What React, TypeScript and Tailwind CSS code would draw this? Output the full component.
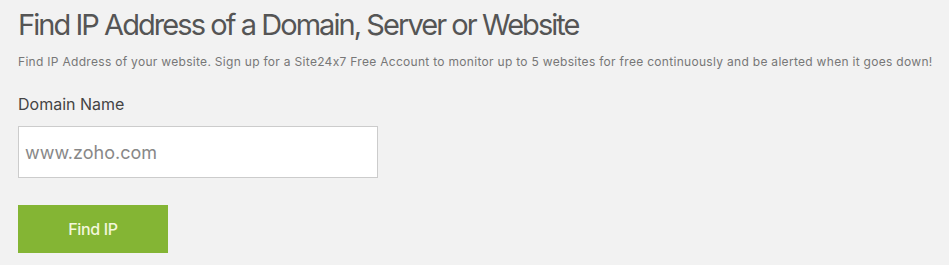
export default function App() {
  return (
    <div className="w-[949px] h-[265px] bg-[#f2f2f2] pl-[18px] pt-[8px] font-['Inter',sans-serif] [font-feature-settings:'calt'_0]">
      <h1 className="text-[29px] leading-[34px] text-[#555555] tracking-[-0.067em]">
        Find IP Address of a Domain, Server or Website
      </h1>
      <p className="mt-[12px] text-[12px] leading-[16px] text-[#777777] tracking-[0.025em]">
        Find IP Address of your website. Sign up for a Site24x7 Free Account to monitor up to 5 websites for free continuously and be alerted when it goes down!
      </p>
      <label className="block mt-[24px] text-[16px] leading-[20px] text-[#444444]">Domain Name</label>
      <input
        type="text"
        placeholder="www.zoho.com"
        className="mt-[12px] w-[360px] h-[52px] bg-white border border-[#cccccc] px-[6px] text-[18px] text-[#555555] placeholder:text-[#888888] outline-none"
      />
      <button className="block mt-[27px] w-[150px] h-[48px] bg-[#84b534] text-[#f3f7dc] text-[16px] font-medium tracking-[-0.02em]">
        Find IP
      </button>
    </div>
  );
}
